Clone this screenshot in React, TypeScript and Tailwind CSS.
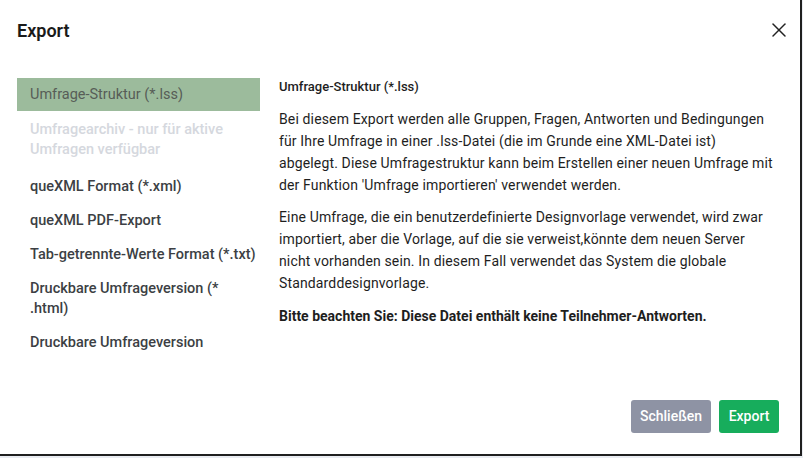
import { X } from 'lucide-react'

const formats = [
  { label: 'Umfrage-Struktur (*.lss)', active: true },
  { label: 'Umfragearchiv - nur für aktive Umfragen verfügbar', disabled: true },
  { label: 'queXML Format (*.xml)' },
  { label: 'queXML PDF-Export' },
  { label: 'Tab-getrennte-Werte Format (*.txt)' },
  { label: 'Druckbare Umfrageversion (* .html)' },
  { label: 'Druckbare Umfrageversion' },
]

export default function App() {
  return (
    <div className="w-[803px] h-[458px] bg-[#e9ecf1] font-['Roboto',sans-serif] text-[#1e1e1e]">
      <div className="w-[802px] h-[456px] bg-white border-r-2 border-b-2 border-[#1f1f1f] flex flex-col">
        {/* Header */}
        <div className="shrink-0 flex items-center justify-between pl-[17px] pr-[9px] h-[60px]">
          <h2 className="text-[18px] font-semibold text-[#1a1a1a]">Export</h2>
          <X className="w-[24px] h-[24px] text-[#222]" strokeWidth={1.5} />
        </div>

        <div className="flex flex-1 min-h-0 pt-[18px]">
          {/* Format list */}
          <div className="shrink-0 w-[243px] ml-[17px] flex flex-col">
            {formats.map((f) => (
              <div
                key={f.label}
                className={`pl-[13px] text-[14.5px] leading-[20px] ${
                  f.active
                    ? 'bg-[#9cbb9c] text-[#575d57] py-[6.5px]'
                    : f.disabled
                    ? 'text-[#d5d8de] font-medium py-[7px] mt-[2px] mb-[3px]'
                    : 'text-[#3c3f44] font-medium py-[7px]'
                }`}
              >
                {f.label}
              </div>
            ))}
          </div>

          {/* Description */}
          <div className="ml-[19px] w-[490px] text-[14px] leading-[22px] tracking-[0.14px]">
            <p className="text-[13px] leading-[18px] font-medium tracking-normal mb-[12px]">Umfrage-Struktur (*.lss)</p>
            <p className="w-[515px] mb-[10px]">
              Bei diesem Export werden alle Gruppen, Fragen, Antworten und Bedingungen
              <br />
              für Ihre Umfrage in einer .lss-Datei (die im Grunde eine XML-Datei ist)
              <br />
              abgelegt. Diese Umfragestruktur kann beim Erstellen einer neuen Umfrage mit der Funktion
              'Umfrage importieren' verwendet werden.
            </p>
            <p className="mb-[11px]">
              Eine Umfrage, die ein benutzerdefinierte Designvorlage verwendet, wird zwar importiert, aber die
              Vorlage, auf die sie verweist,könnte dem neuen Server nicht vorhanden sein. In diesem Fall
              verwendet das System die globale Standarddesignvorlage.
            </p>
            <p className="font-bold tracking-normal">Bitte beachten Sie: Diese Datei enthält keine Teilnehmer-Antworten.</p>
          </div>
        </div>

        {/* Footer */}
        <div className="shrink-0 flex justify-end gap-[8px] pr-[21px] pb-[21px]">
          <button className="h-[33px] w-[80px] rounded-[3px] bg-[#8e93a4] text-white text-[14px] font-medium">
            Schließen
          </button>
          <button className="h-[33px] w-[60px] rounded-[3px] bg-[#17ad5c] text-white text-[14px] font-medium">
            Export
          </button>
        </div>
      </div>
    </div>
  )
}
